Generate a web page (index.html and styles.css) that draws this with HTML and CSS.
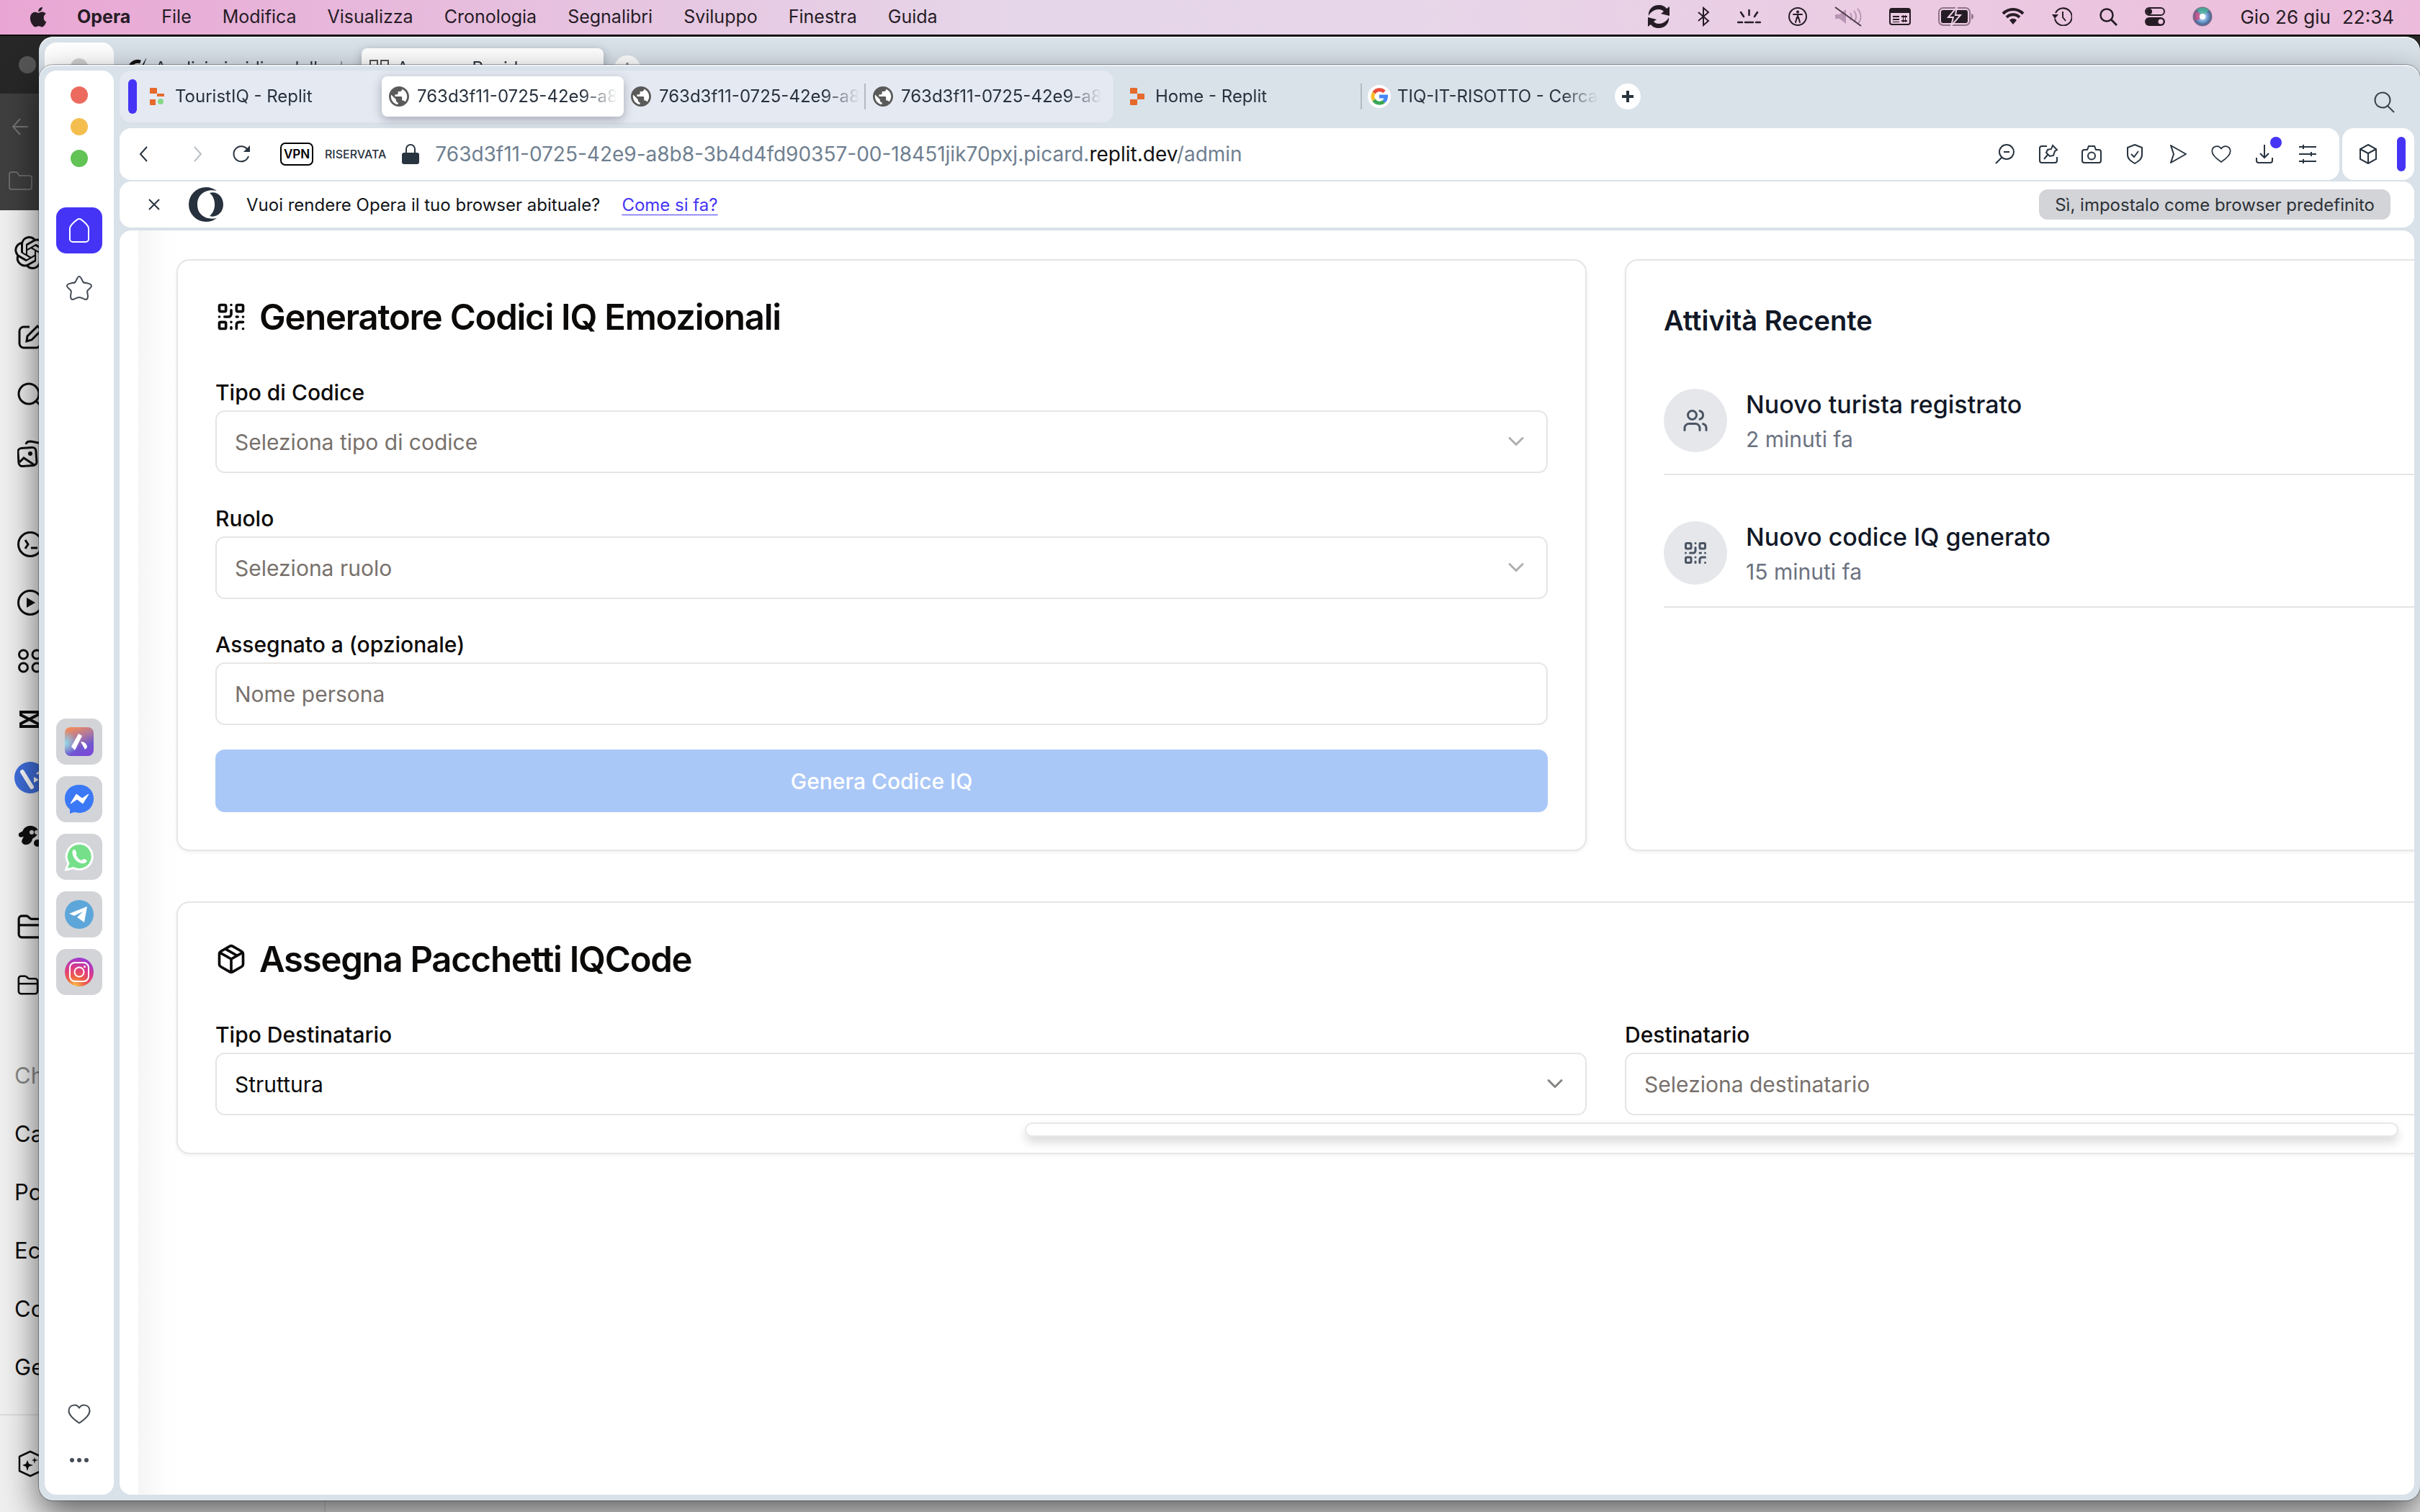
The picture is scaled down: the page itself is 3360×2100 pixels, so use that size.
FILE: index.html
```html
<!DOCTYPE html>
<html lang="it">
<head>
<meta charset="utf-8">
<meta name="viewport" content="width=device-width, initial-scale=1">
<title>TouristIQ - Admin</title>
<link rel="stylesheet" href="styles.css">
</head>
<body>
<svg class="defs" aria-hidden="true">
  <defs>
    <symbol id="globe" viewBox="2 2 20 20"><circle cx="12" cy="12" r="9" fill="#fff"/><path fill="#5a5a5a" d="M12 2C6.480 2 2 6.480 2 12s4.480 10 10 10 10-4.480 10-10S17.520 2 12 2zm-1 17.930c-3.950-.49-7-3.850-7-7.930 0-.62.08-1.210.21-1.790L9 15v1c0 1.100.9 2 2 2v1.930zm6.900-2.540c-.26-.81-1-1.390-1.900-1.390h-1v-3c0-.55-.45-1-1-1H8v-2h2c.55 0 1-.45 1-1V7h2c1.100 0 2-.9 2-2v-.41c2.930 1.190 5 4.060 5 7.410 0 2.080-.8 3.970-2.100 5.390z"/></symbol>
    <symbol id="qr" viewBox="0 0 24 24"><g fill="none" stroke="currentColor" stroke-width="2" stroke-linecap="round" stroke-linejoin="round"><rect width="5" height="5" x="3" y="3" rx="1"/><rect width="5" height="5" x="16" y="3" rx="1"/><rect width="5" height="5" x="3" y="16" rx="1"/><path d="M21 16h-3a2 2 0 0 0-2 2v3M21 21v.01M12 7v3a2 2 0 0 1-2 2H7M3 12h.01M12 3h.01M12 16v.01M16 12h1M21 12v.01M12 21v-1"/></g></symbol>
    <symbol id="chev" viewBox="0 0 24 24"><path d="m6 9 6 6 6-6" fill="none" stroke="currentColor" stroke-width="2" stroke-linecap="round" stroke-linejoin="round"/></symbol>
    <symbol id="heart" viewBox="0 0 32 32"><path d="M16 28.500C10 24.500 1.500 18.500 1.500 11.500 1.500 3 12 1 16 7.500 20 1 30.500 3 30.500 11.500 30.500 18.500 22 24.500 16 28.500z" fill="none" stroke="currentColor" stroke-width="2" stroke-linejoin="round"/></symbol>
    <symbol id="folder" viewBox="0 0 34 32"><path d="M2 6a4 4 0 0 1 4-4h6c3 0 4 4 7 4h9a4 4 0 0 1 4 4v16a4 4 0 0 1-4 4H6a4 4 0 0 1-4-4zM2 14h30" fill="none" stroke="currentColor" stroke-width="3"/></symbol>
    <radialGradient id="siri"><stop offset="0" stop-color="#fff"/><stop offset=".4" stop-color="#8fb6e8"/><stop offset=".8" stop-color="#4a6f9e"/><stop offset="1" stop-color="#8c6a86"/></radialGradient>
    <linearGradient id="aria" x1=".3" y1="0" x2=".7" y2="1"><stop offset="0" stop-color="#f0895c"/><stop offset=".35" stop-color="#b07a9c"/><stop offset=".7" stop-color="#6f58cf"/><stop offset="1" stop-color="#7a48d8"/></linearGradient>
    <radialGradient id="ariaglow" cx="0" cy=".55" r=".45"><stop offset="0" stop-color="#8fdcec"/><stop offset="1" stop-color="#8fdcec" stop-opacity="0"/></radialGradient>
    <radialGradient id="insta" cx=".35" cy="1" r="1.100"><stop offset="0" stop-color="#f9c74d"/><stop offset=".3" stop-color="#ee6146"/><stop offset=".6" stop-color="#dd3a86"/><stop offset="1" stop-color="#8a3be8"/></radialGradient>
  </defs>
</svg>

<header class="menubar">
  <nav class="menus">
    <svg class="apple" width="26" height="32" viewBox="4 1 21 29"><path d="M21.500 17c0-3.200 2.600-4.700 2.700-4.800-1.500-2.200-3.800-2.500-4.600-2.500-2-.2-3.800 1.200-4.800 1.200s-2.500-1.100-4.100-1.100C8.500 9.800 6.600 11 5.500 12.900c-2.200 3.800-.6 9.500 1.600 12.600 1 1.500 2.300 3.200 3.900 3.100s2.200-1 4.100-1 2.500 1 4.100 1 2.800-1.500 3.800-3c1.200-1.800 1.700-3.500 1.700-3.500s-3.200-1.200-3.200-5.100zM18.400 7.600c.9-1 1.500-2.500 1.300-4-1.300.1-2.800.9-3.700 1.900-.8.900-1.500 2.400-1.300 3.800 1.400.1 2.800-.7 3.700-1.700z" fill="currentColor"/></svg>
    <b>Opera</b><span>File</span><span>Modifica</span><span>Visualizza</span><span>Cronologia</span><span>Segnalibri</span><span>Sviluppo</span><span>Finestra</span><span>Guida</span>
  </nav>
  <div class="status">
    <svg width="30" height="32" viewBox="0 0 30 32"><path d="M1 15C0 6 7 0 15 0c5 0 9 2 11 5l4-3v13l-12-3 4-3C18 4 6 5 1 15zM29 17c1 9-6 15-14 15-5 0-9-2-11-5l-4 3V17l12 3-4 3c4 5 16 4 21-6z" fill="currentColor"/></svg>
    <svg width="18" height="28" viewBox="0 0 18 28"><path d="M2 8l14 12-7 6V2l7 6L2 20" fill="none" stroke="currentColor" stroke-width="2"/></svg>
    <svg width="33" height="20" viewBox="0 0 33 20"><path d="M16.500 1v7M5 4l4 6M28 4l-4 6M1 18h6M11 18h11M26 18h6" fill="none" stroke="currentColor" stroke-width="2.500" stroke-linecap="round"/></svg>
    <svg width="26" height="26" viewBox="0 0 26 26"><circle cx="13" cy="13" r="12" fill="none" stroke="currentColor" stroke-width="2"/><circle cx="13" cy="6.500" r="2" fill="currentColor"/><path d="M7 10l12 0M13 10v5M12 14l-2 7M14 14l2 7" fill="none" stroke="currentColor" stroke-width="2" stroke-linecap="round"/></svg>
    <svg width="38" height="28" viewBox="0 0 38 28"><path d="M1 11h6l9-7v20l-9-7H1z" fill="#b795b3"/><path d="M22 9c2 3 2 7 0 10M27 6c4 5 4 11 0 16M32 3c6 7 6 15 0 22" fill="none" stroke="#b795b3" stroke-width="2"/><path d="M1 1l36 26" stroke="#4b3a48" stroke-width="2"/></svg>
    <svg width="30" height="26" viewBox="0 0 30 26"><rect x="1" y="2" width="28" height="22" rx="3" fill="none" stroke="currentColor" stroke-width="2"/><path d="M1 2h28v6H1zM5 12h9v2H5zM5 16h9v2H5zM5 20h9v1H5zM17 12h8v2h-8zM17 18h8v2h-8zM19 11h1v10h-1zM22 11h1v10h-1z" fill="currentColor"/></svg>
    <svg width="50" height="26" viewBox="0 0 50 26"><rect x="1" y="1" width="43" height="24" rx="6" fill="none" stroke="#8f7489" stroke-width="2"/><rect x="4" y="4" width="37" height="18" rx="3" fill="currentColor"/><path d="M46 9c4 1 4 7 0 8z" fill="#8f7489"/><path d="M26 0L14 14h7l-3 12L31 11h-7z" fill="currentColor" stroke="#ebcfe5" stroke-width="2"/></svg>
    <svg width="32" height="24" viewBox="0 0 32 24"><path d="M2 8c8-8 20-8 28 0M7 13c5-5 13-5 18 0" fill="none" stroke="currentColor" stroke-width="4"/><path d="M11 17c3-3 7-3 10 0l-5 6z" fill="currentColor"/></svg>
    <svg width="28" height="26" viewBox="0 0 28 26"><path d="M5 8a12 12 0 1 1-1 8M15 6v8l4 5" fill="none" stroke="currentColor" stroke-width="2"/><path d="M0 10h9l-5 6z" fill="currentColor"/></svg>
    <svg width="25" height="26" viewBox="0 0 25 26"><circle cx="10" cy="11" r="8.500" fill="none" stroke="currentColor" stroke-width="2.500"/><path d="M16 17l8 8" stroke="currentColor" stroke-width="3"/></svg>
    <svg width="28" height="26" viewBox="0 0 28 26"><rect x="1" y="1" width="26" height="10" rx="5" fill="none" stroke="currentColor" stroke-width="2"/><circle cx="6" cy="6" r="4" fill="currentColor"/><rect y="14" width="28" height="12" rx="6" fill="currentColor"/><circle cx="22" cy="20" r="3.500" fill="#ecc5df"/></svg>
    <svg width="28" height="28" viewBox="0 0 28 28"><circle cx="14" cy="14" r="13.500" fill="url(#siri)"/><path d="M3 8c5-2 9 3 11 6-4 4-7 6-11 5z" fill="#d8457c" opacity=".7"/><path d="M6 4c6-4 14-3 17 1l-9 9z" fill="#48b894" opacity=".7"/><circle cx="14" cy="14" r="4" fill="#fff"/></svg>
    <time class="clock"><span>Gio 26 giu</span><span>22:34</span></time>
  </div>
</header>

<main class="desktop">
  <section class="win win-chat" aria-label="Chat">
    <div class="dark-top"><i></i></div>
    <div class="dark-bar">
      <svg width="24" height="24" viewBox="0 0 24 24"><path d="M23 12H2M12 1L2 12l10 11" fill="none" stroke="#747474" stroke-width="2"/></svg>
      <svg width="34" height="26" viewBox="0 0 34 26"><path d="M1 4a3 3 0 0 1 3-3h7l4 5h14a3 3 0 0 1 3 3v13a3 3 0 0 1-3 3H4a3 3 0 0 1-3-3z" fill="none" stroke="#6a6a6a" stroke-width="2"/></svg>
    </div>
    <nav class="chat-nav">
      <span class="slot logo"><svg width="46" height="46" viewBox="0 0 24 24"><path fill="currentColor" d="M22.2819 9.8211a5.9847 5.9847 0 0 0-.5157-4.9108 6.0462 6.0462 0 0 0-6.5098-2.9A6.0651 6.0651 0 0 0 4.9807 4.1818a5.9847 5.9847 0 0 0-3.9977 2.9 6.0462 6.0462 0 0 0 .7427 7.0966 5.98 5.98 0 0 0 .511 4.9107 6.051 6.051 0 0 0 6.5146 2.9001A5.9847 5.9847 0 0 0 13.2599 24a6.0557 6.0557 0 0 0 5.7718-4.2058 5.9894 5.9894 0 0 0 3.9977-2.9001 6.0557 6.0557 0 0 0-.7475-7.0729zm-9.022 12.6081a4.4755 4.4755 0 0 1-2.8764-1.0408l.1419-.0804 4.7783-2.7582a.7948.7948 0 0 0 .3927-.6813v-6.7369l2.02 1.1686a.071.071 0 0 1 .038.052v5.5826a4.504 4.504 0 0 1-4.4945 4.4944zm-9.6607-4.1254a4.4708 4.4708 0 0 1-.5346-3.0137l.142.0852 4.783 2.7582a.7712.7712 0 0 0 .7806 0l5.8428-3.3685v2.3324a.0804.0804 0 0 1-.0332.0615L9.74 19.9502a4.4992 4.4992 0 0 1-6.1408-1.6464zM2.3408 7.8956a4.485 4.485 0 0 1 2.3655-1.9728V11.6a.7664.7664 0 0 0 .3879.6765l5.8144 3.3543-2.0201 1.1685a.0757.0757 0 0 1-.071 0l-4.8303-2.7865A4.504 4.504 0 0 1 2.3408 7.872zm16.5963 3.8558L13.1038 8.364 15.1192 7.2a.0757.0757 0 0 1 .071 0l4.8303 2.7913a4.4944 4.4944 0 0 1-.6765 8.1042v-5.6772a.79.79 0 0 0-.407-.667zm2.0107-3.0231l-.142-.0852-4.7735-2.7818a.7759.7759 0 0 0-.7854 0L9.409 9.2297V6.8974a.0662.0662 0 0 1 .0284-.0615l4.8303-2.7866a4.4992 4.4992 0 0 1 6.6802 4.66zM8.3065 12.863l-2.02-1.1638a.0804.0804 0 0 1-.038-.0567V6.0742a4.4992 4.4992 0 0 1 7.3757-3.4537l-.142.0805L8.704 5.459a.7948.7948 0 0 0-.3927.6813zm1.0976-2.3654l2.602-1.4998 2.6069 1.4998v2.9994l-2.5974 1.4997-2.6067-1.4997Z"/></svg></span>
      <div class="group">
        <span class="slot"><svg width="36" height="36" viewBox="0 0 36 36"><path d="M17 4H9a6 6 0 0 0-6 6v17a6 6 0 0 0 6 6h17a6 6 0 0 0 6-6v-8M13 24l1-7L28 3l6 5-14 14z" fill="none" stroke="currentColor" stroke-width="3"/></svg></span>
        <span class="slot"><svg width="36" height="36" viewBox="0 0 36 36"><circle cx="16" cy="16" r="14" fill="none" stroke="currentColor" stroke-width="3"/><path d="M26 26l8 8" stroke="currentColor" stroke-width="3"/></svg></span>
        <span class="slot"><svg width="36" height="38" viewBox="0 0 36 38"><g fill="none" stroke="currentColor" stroke-width="3"><rect x="1.500" y="11" width="25" height="25" rx="5" transform="rotate(-4 14 24)"/><path d="M3 31l6-6 15 10M12 6c1-4 4-4 7-4l15 3v22"/></g><circle cx="18" cy="19" r="3" fill="currentColor"/></svg></span>
      </div>
      <div class="group">
        <span class="slot"><svg width="36" height="36" viewBox="0 0 36 36"><circle cx="18" cy="18" r="16.500" fill="none" stroke="currentColor" stroke-width="3"/><path d="M11 12l4 6-4 6M19 23h9" fill="none" stroke="currentColor" stroke-width="3"/></svg></span>
        <span class="slot"><svg width="36" height="36" viewBox="0 0 36 36"><circle cx="18" cy="18" r="16.500" fill="none" stroke="currentColor" stroke-width="3"/><path d="M13 11l12 7-12 7z" fill="currentColor"/></svg></span>
        <span class="slot"><svg width="36" height="36" viewBox="0 0 36 36"><g fill="none" stroke="currentColor" stroke-width="3"><circle cx="8.500" cy="9" r="6"/><circle cx="27" cy="9" r="6"/><circle cx="8.500" cy="27" r="6"/><circle cx="27" cy="27" r="6"/></g></svg></span>
        <span class="slot"><svg width="36" height="26" viewBox="0 0 36 26"><path d="M30 8V3H5v4l27 14M30 18v5H5v-4L32 5" fill="none" stroke="currentColor" stroke-width="4"/></svg></span>
        <span class="slot wide"><svg width="44" height="44" viewBox="0 0 44 44"><circle cx="22" cy="22" r="22" fill="#3f6fdc"/><path d="M11 14l13 21" stroke="#fff" stroke-width="6" stroke-linecap="round"/><path d="M27 21v8l7-4zM30 17c2-3 4-5 8-5v6z" fill="#fff"/></svg></span>
        <span class="slot"><svg width="36" height="32" viewBox="0 0 36 32"><path d="M2 13c2-3 5-2 6-5C12 0 26 0 29 9c1 4-4 9-8 11-1 9-13 11-15 4 0-3 2-5 3-7-5 2-8 0-7-4z" fill="#111"/><circle cx="20" cy="11" r="3" fill="#ddd"/><circle cx="27" cy="11" r="3" fill="#ddd"/><circle cx="28" cy="26" r="5" fill="#111"/></svg></span>
      </div>
      <div class="group">
        <span class="slot"><svg width="36" height="34"><use href="#folder"/></svg></span>
        <span class="slot"><svg width="30" height="28"><use href="#folder"/></svg></span>
      </div>
      <div class="group chats">
        <span class="slot muted">Ch</span><a class="slot" href="#">Ca</a><a class="slot" href="#">Po</a><a class="slot" href="#">Ec</a><a class="slot" href="#">Co</a><a class="slot" href="#">Ge</a>
      </div>
      <div class="upgrade"><svg width="36" height="38" viewBox="0 0 36 38"><path d="M18 2l15 7v20l-15 7L3 29V9z" fill="none" stroke="currentColor" stroke-width="2.500" stroke-linejoin="round"/><path d="M14 14l2 5 6 2-6 2-2 6-2-6-5-2 5-2zM24 10l1 3 4 1-4 1-1 4-1-4-3-1 3-1z" fill="currentColor"/></svg></div>
    </nav>
  </section>

  <section class="win win-back" aria-label="Opera, finestra in secondo piano">
    <div class="back-side"><i class="light off"></i></div>
    <div class="back-tabs">
      <div class="tab"><span class="fav"><svg width="28" height="28" viewBox="0 0 28 28"><path d="M19 5C11 2 4 8 4 16s8 11 14 8" fill="none" stroke="#111" stroke-width="5"/><path d="M28 -2L14 22l6-3z" fill="#111"/></svg></span><span class="tab-text">Analisi giuridica dello do</span></div>
      <div class="tab active"><span class="fav"><svg width="28" height="28" viewBox="0 0 28 28"><path d="M2 3h10v10H2zM17 3h10v10H17zM2 17h10v10H2zM17 17h10v10H17z" fill="none" stroke="#555" stroke-width="2"/></svg></span><span class="tab-text">Accesso Rapido</span></div>
      <span class="plus"><svg width="18" height="18" viewBox="0 0 18 18"><path d="M9 1v16M1 9h16" stroke="#888" stroke-width="3"/></svg></span>
    </div>
  </section>

  <section class="win win-front" aria-label="Opera">
    <aside class="sidebar">
      <div class="lights"><i class="light red"></i><i class="light amber"></i><i class="light green"></i></div>
      <button class="side-btn home" aria-label="Home"><svg width="32" height="36" viewBox="0 0 32 36"><path d="M16 2c3 0 13 9 13 13v15a4 4 0 0 1-4 4H7a4 4 0 0 1-4-4V15C3 11 13 2 16 2z" fill="none" stroke="#fff" stroke-width="2"/></svg></button>
      <button class="side-btn" aria-label="Preferiti"><svg width="36" height="36" viewBox="0 0 36 36"><path d="M18 2c2 0 3 3 5 7 1 2 2 2 5 2 5 1 7 2 7 4s-3 4-5 6 0 5 0 8-1 5-3 5-5-3-9-3-7 3-9 3-3-2-3-5 2-6 0-8-5-4-5-6 2-3 7-4c3 0 4 0 5-2 2-4 3-7 5-7z" fill="none" stroke="#444c55" stroke-width="2"/></svg></button>
      <div class="apps">
        <button class="app" aria-label="Aria"><svg width="40" height="40" viewBox="0 0 40 40"><rect width="40" height="40" rx="8" fill="url(#aria)"/><rect width="40" height="40" rx="8" fill="url(#ariaglow)"/><path d="M19 9l5 3-10 20-5-5zM22 20c6 0 9 4 9 8l-3 3z" fill="#fff"/></svg></button>
        <button class="app" aria-label="Messenger"><svg width="40" height="40" viewBox="0 0 40 40"><path d="M20 0c12 0 20 8 20 19s-8 20-20 20c-3 0-5-1-7-1l-6 2v-6C2 30 0 25 0 19 0 8 8 0 20 0z" fill="#3a78f6"/><path d="M8 26l8-13 8 6 9-6-8 13-8-6z" fill="#fff" stroke="#fff" stroke-linejoin="round"/></svg></button>
        <button class="app" aria-label="WhatsApp"><svg width="40" height="40" viewBox="0 0 40 40"><path d="M21 1.500a18 18 0 1 1-9 34L1.500 38 5 29A18 18 0 0 1 21 1.500z" fill="#75e089" stroke="#fff" stroke-width="3"/><path d="M11 11c2-2 4-1 5 3 1 2-1 3 0 4 2 4 4 6 7 7 1 0 2-2 4-2 4 1 5 3 2 5-8 5-21-7-18-17z" fill="#fff"/></svg></button>
        <button class="app" aria-label="Telegram"><svg width="40" height="40" viewBox="0 0 40 40"><circle cx="20" cy="20" r="20" fill="#5da6da"/><path d="M6 19L31 9l-4 22-10-7 8-8-12 6z" fill="#fff"/></svg></button>
        <button class="app" aria-label="Instagram"><svg width="40" height="40" viewBox="0 0 40 40"><circle cx="20" cy="20" r="20" fill="url(#insta)"/><rect x="7" y="7" width="26" height="26" rx="7" fill="none" stroke="#fff" stroke-width="2"/><circle cx="20" cy="20" r="6.500" fill="none" stroke="#fff" stroke-width="2"/><circle cx="27.500" cy="12.500" r="1.500" fill="#fff"/></svg></button>
      </div>
      <div class="side-foot">
        <button class="bare" aria-label="Pinboard"><svg width="34" height="32"><use href="#heart"/></svg></button>
        <button class="bare" aria-label="Altro"><svg width="28" height="8" viewBox="0 0 28 8"><g fill="#444c55"><circle cx="4" cy="4" r="3"/><circle cx="14" cy="4" r="3"/><circle cx="24" cy="4" r="3"/></g></svg></button>
      </div>
    </aside>

    <div class="browser">
      <div class="tabstrip">
        <div class="tab-group">
          <i class="marker"></i>
          <button class="tab"><span class="fav"><svg width="20" height="24" viewBox="0 0 20 24"><path d="M0 1a1 1 0 0 1 1-1h8a1 1 0 0 1 1 1v7H0zM10 8h9a1 1 0 0 1 1 1v3H10zM0 16h8v8H1a1 1 0 0 1-1-1z" fill="#e56a2c"/><circle cx="15" cy="19" r="4" fill="#86d888"/></svg></span><span class="tab-text">TouristIQ - Replit</span></button>
          <button class="tab active"><span class="fav"><svg width="28" height="28"><use href="#globe"/></svg></span><span class="tab-text">763d3f11-0725-42e9-a8</span></button>
          <button class="tab"><span class="fav"><svg width="28" height="28"><use href="#globe"/></svg></span><span class="tab-text">763d3f11-0725-42e9-a8</span></button>
          <button class="tab ruled"><span class="fav"><svg width="28" height="28"><use href="#globe"/></svg></span><span class="tab-text">763d3f11-0725-42e9-a8</span></button>
        </div>
        <button class="tab"><span class="fav"><svg width="20" height="24" viewBox="0 0 20 24"><path d="M0 1a1 1 0 0 1 1-1h8a1 1 0 0 1 1 1v7H0zM10 8h9a1 1 0 0 1 1 1v6a1 1 0 0 1-1 1h-9zM0 16h10v7a1 1 0 0 1-1 1H1a1 1 0 0 1-1-1z" fill="#e56a2c"/></svg></span><span class="tab-text">Home - Replit</span></button>
        <button class="tab ruled"><span class="fav g"><svg width="24" height="24" viewBox="0 0 24 24"><g fill="none" stroke-width="5"><path d="M4.500 7A9.500 9.500 0 0 1 19 5.500" stroke="#ea4d3d"/><path d="M4.500 17a9.500 9.500 0 0 1 0-10" stroke="#f6bf2b"/><path d="M18.500 19a9.500 9.500 0 0 1-14-2" stroke="#3aa757"/><path d="M12 12h9.500c0 3-1 5-3 7" stroke="#4688f4"/></g></svg></span><span class="tab-text">TIQ-IT-RISOTTO - Cerca</span></button>
        <button class="plus" aria-label="Nuova scheda"><svg width="18" height="18" viewBox="0 0 18 18"><path d="M9 1v16M1 9h16" stroke="#28343f" stroke-width="4"/></svg></button>
        <button class="bare tab-search" aria-label="Cerca schede"><svg width="30" height="30" viewBox="0 0 30 30"><circle cx="12" cy="12" r="10.500" fill="none" stroke="#3c444c" stroke-width="2"/><path d="M19 20l9 9" stroke="#3c444c" stroke-width="2"/></svg></button>
      </div>

      <div class="toolbar">
        <div class="address">
          <div class="navs">
            <button class="bare" aria-label="Indietro"><svg width="24" height="24" viewBox="0 0 24 24"><path d="M16 2L7 12l9 10" fill="none" stroke="#28343f" stroke-width="2"/></svg></button>
            <button class="bare" aria-label="Avanti"><svg width="24" height="24" viewBox="0 0 24 24"><path d="M8 2l9 10-9 10" fill="none" stroke="#b9bfc5" stroke-width="2"/></svg></button>
          </div>
          <button class="bare reload" aria-label="Ricarica"><svg width="26" height="26" viewBox="0 0 26 26"><path d="M23 16a10.500 10.500 0 1 1-2-10" fill="none" stroke="#28343f" stroke-width="2"/><path d="M25 1v9h-9z" fill="#28343f"/></svg></button>
          <span class="vpn">VPN</span>
          <span class="private">RISERVATA</span>
          <svg class="lock" width="24" height="28" viewBox="0 0 24 28"><rect y="12" width="24" height="16" rx="3" fill="#28343f"/><path d="M6 13V7a6 6 0 0 1 12 0v6" fill="none" stroke="#28343f" stroke-width="2"/></svg>
          <span class="url">763d3f11-0725-42e9-a8b8-3b4d4fd90357-00-18451jik70pxj.picard.<b>replit.dev</b>/admin</span>
          <div class="tools">
            <svg width="28" height="28" viewBox="0 0 28 28"><circle cx="16" cy="11" r="10"/><path d="M9 19l-8 8M12 11h8"/></svg>
            <svg width="28" height="28" viewBox="0 0 28 28"><path d="M12 3H5a3 3 0 0 0-3 3v17a3 3 0 0 0 3 3h18a3 3 0 0 0 3-3v-5M20 2l6 6-3 2-2 6-5 1-5-5 2-4 5-1zM13 15l-5 6"/></svg>
            <svg width="28" height="28" viewBox="0 0 28 28"><path d="M4 8h4l2-5h8l2 5h4a3 3 0 0 1 3 3v12a3 3 0 0 1-3 3H4a3 3 0 0 1-3-3V11a3 3 0 0 1 3-3z"/><circle cx="14" cy="16.500" r="5"/></svg>
            <svg width="28" height="28" viewBox="0 0 28 28"><path d="M14 1l10 4v10c0 6-5 9-10 12C9 24 4 21 4 15V5zM9 14l4 4 6-8"/></svg>
            <svg width="28" height="28" viewBox="0 0 28 28"><path d="M4 2l21 12L4 26l4-12z" stroke-linejoin="round"/></svg>
            <svg width="28" height="28"><use href="#heart"/></svg>
            <span class="dl"><svg width="28" height="28" viewBox="0 0 28 28"><path d="M14 1v18M8 13l6 6 6-6M3 19v4a3 3 0 0 0 3 3h16a3 3 0 0 0 3-3v-4"/></svg><i></i></span>
            <svg width="28" height="28" viewBox="0 0 28 28"><path d="M2 4h24M2 14h24M2 24h24M8 1v6M19 11v6M8 21v6"/></svg>
          </div>
        </div>
        <div class="ext">
          <svg width="28" height="28" viewBox="0 0 28 28"><path d="M14 1l11 6v14l-11 6L3 21V7zM3 7l11 6 11-6M14 13v14"/></svg>
          <i class="marker"></i>
        </div>
      </div>

      <div class="infobar">
        <button class="bare close" aria-label="Chiudi"><svg width="16" height="16" viewBox="0 0 16 16"><path d="M1 1l14 14M15 1L1 15" stroke="#28343f" stroke-width="2"/></svg></button>
        <svg width="48" height="48" viewBox="0 0 48 48"><path d="M24 0a24 24 0 1 0 0 48c6 0 11-2 15-5-14 3-27-4-27-19S25 2 39 5C35 2 30 0 24 0z" fill="#28323e"/><path d="M29 8c10-3 19 5 19 16s-9 19-19 16c10-8 9-25 0-32z" fill="#28323e"/></svg>
        <span class="ask">Vuoi rendere Opera il tuo browser abituale?</span>
        <a href="#">Come si fa?</a>
        <button class="default-btn">Sì, impostalo come browser predefinito</button>
      </div>

      <div class="page">
        <div class="content">
          <form class="card generator">
            <h3 class="title"><svg width="44" height="44"><use href="#qr"/></svg>Generatore Codici IQ Emozionali</h3>
            <div class="fields">
              <div class="field">
                <label for="tipo">Tipo di Codice</label>
                <div class="control"><select id="tipo" class="empty"><option>Seleziona tipo di codice</option></select><svg class="chev" width="36" height="36"><use href="#chev"/></svg></div>
              </div>
              <div class="field">
                <label for="ruolo">Ruolo</label>
                <div class="control"><select id="ruolo" class="empty"><option>Seleziona ruolo</option></select><svg class="chev" width="36" height="36"><use href="#chev"/></svg></div>
              </div>
              <div class="field">
                <label for="persona">Assegnato a (opzionale)</label>
                <div class="control"><input id="persona" type="text" placeholder="Nome persona"></div>
              </div>
            </div>
            <button class="submit" type="button" disabled>Genera Codice IQ</button>
          </form>

          <section class="card activity">
            <h3>Attività Recente</h3>
            <ul>
              <li><span class="badge"><svg width="36" height="36" viewBox="0 0 24 24"><path d="M16 21v-2a4 4 0 0 0-4-4H6a4 4 0 0 0-4 4v2M22 21v-2a4 4 0 0 0-3-3.870M16 3.130a4 4 0 0 1 0 7.750" fill="none" stroke="currentColor" stroke-width="2" stroke-linecap="round"/><circle cx="9" cy="7" r="4" fill="none" stroke="currentColor" stroke-width="2"/></svg></span><div><p class="what">Nuovo turista registrato</p><p class="when">2 minuti fa</p></div></li>
              <li><span class="badge"><svg width="36" height="36"><use href="#qr"/></svg></span><div><p class="what">Nuovo codice IQ generato</p><p class="when">15 minuti fa</p></div></li>
            </ul>
          </section>

          <form class="card packages">
            <h3 class="title"><svg width="44" height="44" viewBox="0 0 24 24"><path d="M11 21.730a2 2 0 0 0 2 0l7-4A2 2 0 0 0 21 16V8a2 2 0 0 0-1-1.730l-7-4a2 2 0 0 0-2 0l-7 4A2 2 0 0 0 3 8v8a2 2 0 0 0 1 1.730zM12 22V12M3.300 7l8.700 5 8.700-5M7.500 4.270l9 5.150" fill="none" stroke="currentColor" stroke-width="2" stroke-linecap="round" stroke-linejoin="round"/></svg>Assegna Pacchetti IQCode</h3>
            <div class="pair">
              <div class="field">
                <label for="dest-tipo">Tipo Destinatario</label>
                <div class="control"><select id="dest-tipo"><option>Struttura</option></select><svg class="chev strong" width="36" height="36"><use href="#chev"/></svg></div>
              </div>
              <div class="field">
                <label for="dest">Destinatario</label>
                <div class="control"><select id="dest" class="empty"><option>Seleziona destinatario</option></select></div>
              </div>
            </div>
          </form>
        </div>
        <div class="popup" role="listbox" aria-label="Destinatario"></div>
      </div>
    </div>
  </section>
</main>
</body>
</html>
```

FILE: styles.css
```css
* { box-sizing: border-box; }
html, body { height: 100%; }
body {
  margin: 0;
  display: flex;
  flex-direction: column;
  overflow: hidden;
  background: #111;
  color: #0c0a09;
  font-family: Inter, "Liberation Sans", sans-serif;
  font-size: 24px;
}
.defs { position: absolute; width: 0; height: 0; }
svg { display: block; flex: none; }
button { font: inherit; color: inherit; border: 0; padding: 0; background: none; }
h3, p, ul { margin: 0; padding: 0; }

/* macOS menu bar */
.menubar {
  flex: none;
  display: flex;
  justify-content: space-between;
  align-items: center;
  height: 50px;
  padding: 0 36px 2px 40px;
  border-bottom: 2px solid #0b0509;
  background: linear-gradient(90deg, #e9a6d4, #e6c6e1 27%, #e6d6e9 42%, #e7d6e9 58%, #ebcae2 80%, #ecbbdb);
  color: #261c25;
  font-size: 25px;
}
.menus, .status { display: flex; align-items: center; }
.menus { gap: 43px; }
.menus b { margin-left: -2px; }
.status { gap: 38px; }
.clock { display: flex; gap: 16px; font-size: 26px; }

.desktop { position: relative; flex: 1; overflow: hidden; }
.win { position: absolute; overflow: hidden; }

/* chat window, mostly covered */
.win-chat { inset: 0; background: #efefef; color: #0d0d0d; }
.dark-top { height: 80px; padding: 28px 26px; background: #272727; }
.dark-top i { display: block; width: 24px; height: 24px; border-radius: 50%; background: #555; }
.dark-bar { height: 162px; padding: 34px 10px 0 16px; background: #3f3f3f; display: flex; flex-direction: column; gap: 50px; }
.dark-bar svg + svg { margin-left: -4px; }
.chat-nav { width: 452px; padding: 18px 0 0 24px; border-right: 2px solid #dcdcdc; }
.chat-nav .group { margin-top: 45px; }
.chat-nav .logo + .group { margin-top: 36px; }
.slot { display: flex; align-items: center; height: 81px; }
.slot.wide, .slot.logo { margin-left: -4px; }
.chats .slot { margin-left: -4px; font-size: 31px; color: #0d0d0d; text-decoration: none; }
.chats .muted { color: #8a8a8a; }
.upgrade { margin: 25px 0 0 -24px; padding: 48px 24px; border-top: 2px solid #dcdcdc; }

/* Opera windows */
.win-back {
  left: 54px; right: 0; top: 1px; height: 900px;
  display: flex; gap: 8px; padding: 8px;
  border-radius: 20px 20px 0 0;
  background: #d9e1e9;
  box-shadow: inset 0 2px 0 #edf1f5;
}
.back-side { width: 96px; padding: 22px 36px; border-radius: 16px; background: #fff; }
.back-tabs { display: flex; padding: 8px 0 0; }
.back-tabs .plus { margin-left: 15px; margin-top: 10px; }
.win-front {
  left: 54px; right: 0; top: 40px; bottom: 16px;
  display: flex; gap: 8px; padding: 8px;
  border-radius: 20px;
  background: #d9e1e9;
  box-shadow: 0 0 0 1px rgba(0,0,0,.3), 0 20px 50px rgba(0,0,0,.6), inset 0 2px 0 #edf1f5;
}

.sidebar {
  flex: none;
  display: flex;
  flex-direction: column;
  align-items: center;
  width: 96px;
  padding: 22px 0 44px;
  border-radius: 16px;
  background: #fff;
  color: #444c55;
}
.lights { display: flex; flex-direction: column; gap: 20px; margin-bottom: 56px; }
.light { display: block; width: 24px; height: 24px; border-radius: 50%; }
.red { background: #ec6a5e; }
.amber { background: #f4be4f; }
.green { background: #61c454; }
.off { background: #d2d2d2; }
.side-btn { display: grid; place-items: center; width: 64px; height: 64px; margin-bottom: 16px; border-radius: 14px; }
.home { background: #4534f6; }
.apps { display: flex; flex-direction: column; gap: 16px; margin-top: 550px; }
.app { display: grid; place-items: center; width: 64px; height: 64px; border-radius: 14px; background: #d3d4d8; }
.side-foot { display: flex; flex-direction: column; align-items: center; gap: 44px; margin-top: auto; }
.bare { display: grid; place-items: center; }

.browser { flex: 1; min-width: 0; display: flex; flex-direction: column; }

.tabstrip { display: flex; align-items: center; height: 72px; margin-bottom: 8px; }
.tab-group { display: flex; align-items: center; height: 72px; margin-right: 9px; padding: 0 8px 0 12px; border-radius: 16px; background: #e5e9f2; }
.marker { width: 12px; height: 48px; border-radius: 6px; background: #4534f6; }
.tab-group .marker { margin-right: 4px; }
.tab {
  position: relative;
  display: flex;
  align-items: center;
  gap: 11px;
  width: 336px;
  height: 56px;
  padding: 0 9px 0 10px;
  border-radius: 8px;
  text-align: left;
  color: #28323e;
}
.tab.active { background: #fff; box-shadow: 0 4px 14px rgba(40,50,62,.35); }
.tab.ruled::before { content: ""; position: absolute; left: -2px; top: 10px; width: 2px; height: 36px; background: #b3bac1; }
.fav { flex: none; display: grid; place-items: center; width: 28px; height: 28px; }
.fav.g { border-radius: 50%; background: #fff; box-shadow: 0 0 0 2px #fff; }
.tab-text {
  flex: 1;
  overflow: hidden;
  white-space: nowrap;
  line-height: 32px;
  -webkit-mask-image: linear-gradient(90deg, #000 calc(100% - 50px), transparent);
  mask-image: linear-gradient(90deg, #000 calc(100% - 50px), transparent);
}
.plus { display: grid; place-items: center; width: 36px; height: 36px; margin-left: 15px; border-radius: 50%; background: #fff; }
.tab-search { margin: 16px 26px 0 auto; }

.toolbar { display: flex; gap: 4px; height: 72px; margin-bottom: 2px; }
.address, .ext, .infobar { display: flex; align-items: center; border-radius: 16px; background: #fff; }
.address { flex: 1; padding: 0 30px 0 22px; }
.navs { display: flex; gap: 50px; }
.reload { margin: 0 41px 0 36px; }
.vpn { display: grid; place-items: center; width: 46px; height: 32px; border: 2px solid #000; border-radius: 7px; font-size: 17px; font-weight: 600; color: #000; }
.private { margin: 0 22px 0 16px; font-size: 16px; font-weight: 500; color: #28323e; }
.url { margin-left: 22px; font-size: 28px; color: #6f7f90; }
.url b { font-weight: 400; color: #111; }
.tools { display: flex; gap: 32px; margin-left: auto; color: #28343f; }
.tools svg, .ext svg { fill: none; stroke: #28343f; stroke-width: 2; }
.dl { position: relative; }
.dl i { position: absolute; left: 22px; top: -10px; width: 16px; height: 16px; border-radius: 50%; background: #4534f6; }
.ext { width: 100px; justify-content: space-between; padding: 0 12px 0 22px; }

.infobar { height: 64px; margin-bottom: 4px; padding: 0 33px 0 40px; color: #111418; }
.close { margin-right: 40px; }
.ask { margin: 0 30px 0 32px; }
.infobar a { color: #4534f6; text-decoration: underline; text-decoration-thickness: 1px; text-underline-offset: 5px; }
.default-btn { height: 42px; margin-left: auto; padding: 0 22px; border-radius: 12px; background: #d3d4d8; color: #2c3137; }

/* page in the tab */
.page {
  position: relative;
  flex: 1;
  overflow: hidden;
  padding: 40px 0 0 79px;
  border-radius: 16px;
  background: linear-gradient(90deg, #fff 26px, #f5f5f5 26px, #fdfdfd 60px, #fff 90px);
}
.content { display: grid; grid-template-columns: 1fr 1fr; gap: 70px 53px; width: 127.75%; }
.card { padding: 52px; border: 2px solid #e6e6e6; border-radius: 18px; background: #fff; box-shadow: 0 2px 5px rgba(0,0,0,.06); }
.packages { grid-column: 1 / -1; }
.title { display: flex; align-items: center; gap: 17px; height: 52px; margin-bottom: 54px; font-size: 49px; font-weight: 600; letter-spacing: -0.025em; white-space: nowrap; }
.fields { display: flex; flex-direction: column; gap: 38px; }
.pair { display: grid; grid-template-columns: 1fr 1fr; gap: 53px; }
.field label { display: block; height: 50px; line-height: 50px; font-size: 30px; font-weight: 500; }
.control { position: relative; }
.control select, .control input {
  display: block;
  width: 100%;
  height: 87px;
  padding: 0 25px;
  border: 2px solid #e6e5e4;
  border-radius: 13px;
  background: #fff;
  color: #0c0a09;
  font: 400 30px Inter, "Liberation Sans", sans-serif;
  appearance: none;
}
.control .empty, .control input::placeholder { color: #78716c; opacity: 1; }
.chev { position: absolute; right: 26px; top: 25px; color: #b0aeac; }
.chev.strong { color: #858483; }
.submit { display: block; width: 100%; height: 87px; margin-top: 34px; border-radius: 13px; background: #aac8f7; color: #fff; font-size: 30px; font-weight: 500; }

.activity h3 { font-size: 38px; line-height: 62px; font-weight: 600; color: #111827; }
.activity ul { display: flex; flex-direction: column; gap: 59px; margin-top: 59px; list-style: none; }
.activity li { display: flex; align-items: center; gap: 26px; padding-bottom: 26px; border-bottom: 2px solid #e5e5e5; }
.badge { display: grid; place-items: center; width: 88px; height: 88px; border-radius: 50%; background: #e5e7eb; color: #4b5563; }
.what { font-size: 34px; line-height: 53px; font-weight: 500; color: #111827; }
.when { font-size: 30px; line-height: 44px; color: #6b7280; }

.popup {
  position: absolute;
  right: 22px;
  top: 1239px;
  left: 1257px;
  height: 20px;
  border: 2px solid #e7e7e7;
  border-radius: 11px;
  background: #fff;
  box-shadow: 0 8px 14px rgba(0,0,0,.14);
}
```
